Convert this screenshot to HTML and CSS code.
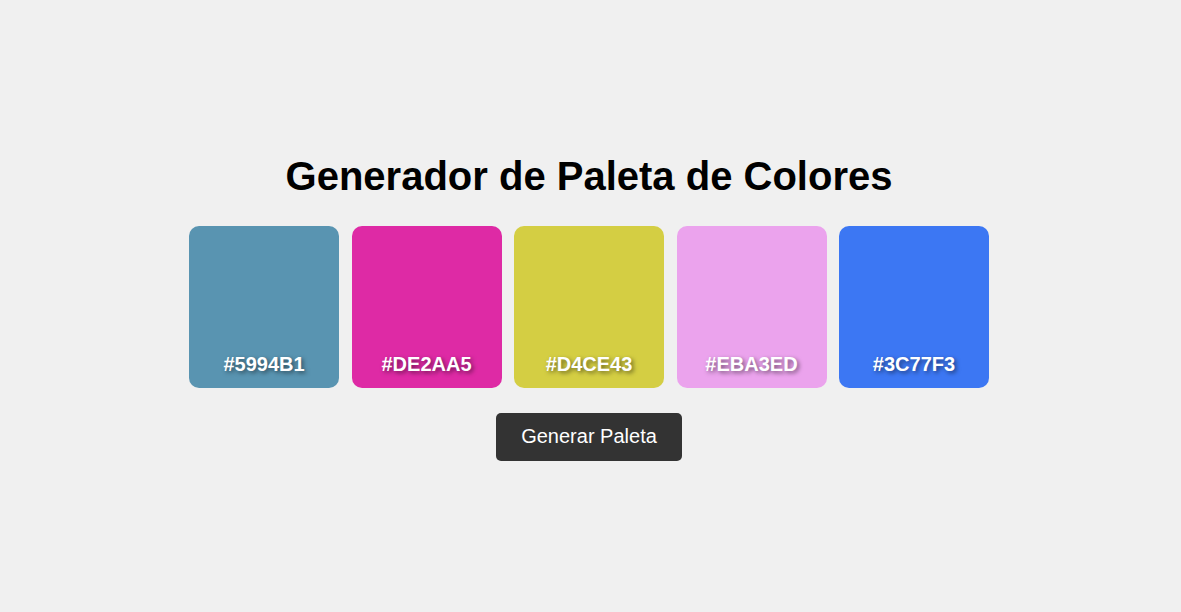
FILE: index.html
```html
<!DOCTYPE html>
<html lang="es">
<head>
<meta charset="utf-8">
<title>Generador de Paleta de Colores</title>
<link rel="stylesheet" href="styles.css">
</head>
<body>
<main class="app">
  <h1 class="title">Generador de Paleta de Colores</h1>
  <div class="palette">
    <div class="swatch" style="background:#5994B1"><span class="code">#5994B1</span></div>
    <div class="swatch" style="background:#DE2AA5"><span class="code">#DE2AA5</span></div>
    <div class="swatch" style="background:#D4CE43"><span class="code">#D4CE43</span></div>
    <div class="swatch" style="background:#EBA3ED"><span class="code">#EBA3ED</span></div>
    <div class="swatch" style="background:#3C77F3"><span class="code">#3C77F3</span></div>
  </div>
  <button class="btn" type="button">Generar Paleta</button>
</main>
</body>
</html>
```
FILE: styles.css
```css
html, body {
  margin: 0;
  padding: 0;
}
body {
  background: #f0f0f0;
  font-family: "Liberation Sans", Arial, sans-serif;
  color: #000;
}
.app {
  height: 100vh;
  box-sizing: border-box;
  padding: 0 3px 2px 0;
  display: flex;
  flex-direction: column;
  align-items: center;
  justify-content: center;
}
.title {
  font-size: 40px;
  font-weight: bold;
  margin: 0 0 24px;
  line-height: 52px;
}
.palette {
  display: flex;
  gap: 12.5px;
}
.swatch {
  width: 150px;
  height: 162px;
  border-radius: 10px;
  display: flex;
  align-items: flex-end;
  justify-content: center;
  padding-bottom: 12px;
  box-sizing: border-box;
}
.code {
  color: #fff;
  font-weight: bold;
  font-size: 20px;
  text-shadow: 2px 2px 4px rgba(0, 0, 0, 0.5);
}
.btn {
  margin-top: 25px;
  background: #333;
  color: #fff;
  border: none;
  border-radius: 5px;
  font-family: "Liberation Sans", Arial, sans-serif;
  font-size: 20px;
  height: 48px;
  padding: 0 25px;
  cursor: pointer;
}
```
